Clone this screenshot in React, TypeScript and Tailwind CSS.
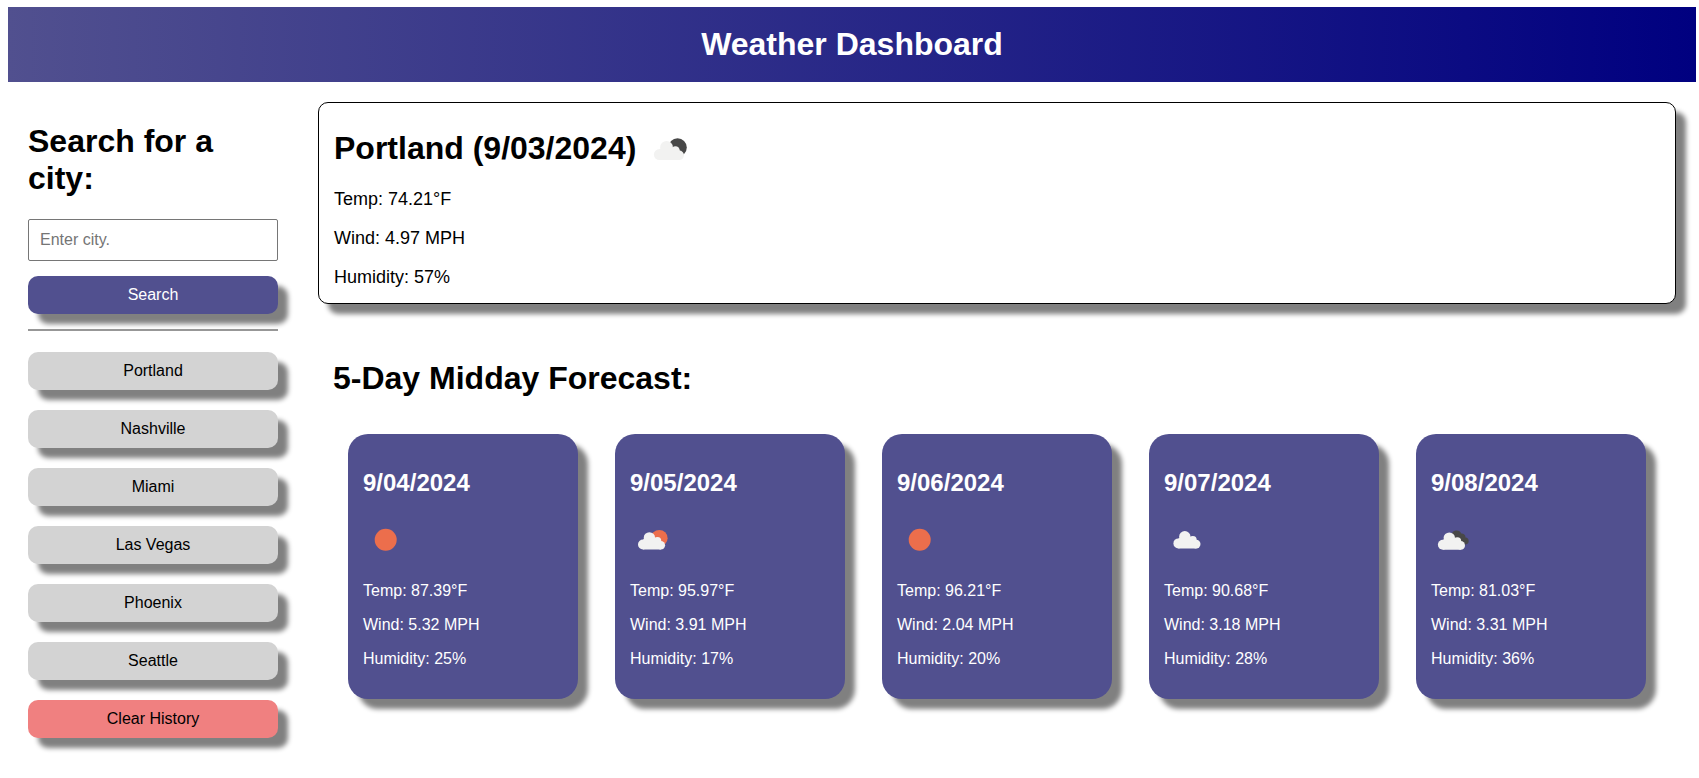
import React from "react";

type Condition = "clear" | "few-day" | "few-night" | "scattered" | "broken";

interface Day {
  date: string;
  condition: Condition;
  temp: string;
  wind: string;
  humidity: string;
}

const cities = ["Portland", "Nashville", "Miami", "Las Vegas", "Phoenix", "Seattle"];

const days: Day[] = [
  { date: "9/04/2024", condition: "clear", temp: "87.39", wind: "5.32", humidity: "25" },
  { date: "9/05/2024", condition: "few-day", temp: "95.97", wind: "3.91", humidity: "17" },
  { date: "9/06/2024", condition: "clear", temp: "96.21", wind: "2.04", humidity: "20" },
  { date: "9/07/2024", condition: "scattered", temp: "90.68", wind: "3.18", humidity: "28" },
  { date: "9/08/2024", condition: "broken", temp: "81.03", wind: "3.31", humidity: "36" },
];

function Cloud({ transform, fill }: { transform?: string; fill: string }) {
  return (
    <g transform={transform} fill={fill}>
      <circle cx="19.4" cy="20.9" r="5.7" />
      <circle cx="13" cy="27.5" r="5" />
      <circle cx="27.4" cy="23.9" r="3.9" />
      <circle cx="30.8" cy="28.2" r="4.3" />
      <path d="M13 22.5 L19 20 L27 22 L31 27 V32.5 H13 Z" />
    </g>
  );
}

function WeatherIcon({ condition, className }: { condition: Condition; className: string }) {
  return (
    <svg viewBox="0 0 45 45" className={className} aria-hidden="true">
      {condition === "clear" && <circle cx="22.7" cy="22.8" r="11" fill="#ec6e4c" />}
      {condition === "few-day" && (
        <>
          <circle cx="29.3" cy="21.2" r="8.3" fill="#ec6e4c" />
          <Cloud fill="#f2f2f1" />
        </>
      )}
      {condition === "few-night" && (
        <>
          <circle cx="29.3" cy="21.2" r="8.3" fill="#484848" />
          <Cloud fill="#f2f2f1" />
        </>
      )}
      {condition === "scattered" && <Cloud fill="#f2f2f1" transform="translate(1.4 -1.1)" />}
      {condition === "broken" && (
        <>
          <path
            d="M20.4 18 A5.2 5.2 0 0 1 30.3 16.5 A3.8 3.8 0 0 1 34.5 20.4 A3.6 3.6 0 0 1 34.8 27.5 L28 27.3 Z"
            fill="#484848"
          />
          <Cloud fill="#f2f2f1" transform="translate(-1.1 0.2)" />
        </>
      )}
    </svg>
  );
}

function SideButton({ label, className }: { label: string; className: string }) {
  return (
    <button
      type="button"
      className={`h-[38px] w-full shrink-0 rounded-[10px] text-base leading-[18px] shadow-[10px_10px_5px_gray] ${className}`}
    >
      {label}
    </button>
  );
}

function ForecastCard({ day }: { day: Day }) {
  return (
    <article className="h-[265px] w-[230px] rounded-[20px] bg-[#51508f] px-[15px] pt-[35px] text-white shadow-[10px_10px_5px_gray]">
      <h3 className="text-2xl leading-7 font-bold">{day.date}</h3>
      <WeatherIcon condition={day.condition} className="mt-5 block size-[45px]" />
      <div className="mt-5 flex flex-col gap-4 leading-[18px]">
        <p>Temp: {day.temp}°F</p>
        <p>Wind: {day.wind} MPH</p>
        <p>Humidity: {day.humidity}%</p>
      </div>
    </article>
  );
}

export default function App() {
  return (
    <div className="min-h-[778px] bg-white pt-[7px] pr-[3px] pl-2 font-['Liberation_Sans',Arial,sans-serif] text-black">
      <header className="flex h-[75px] items-center justify-center bg-linear-[to_right,#51508f,navy]">
        <h1 className="text-[32px] leading-[37px] font-bold text-white">Weather Dashboard</h1>
      </header>

      <div className="flex items-start">
        <aside className="flex w-[290px] flex-col px-5 pt-[41px]">
          <h2 className="text-[32px] leading-[37px] font-bold">Search for a city:</h2>
          <input
            type="text"
            placeholder="Enter city."
            className="mt-[22px] h-[42px] w-full rounded-[2px] border border-[#767676] px-[11px] text-base placeholder:text-[#757575]"
          />
          <SideButton label="Search" className="mt-[15px] bg-[#51508f] text-white" />
          <hr className="mt-[15px] h-0.5 border-0 bg-[#979797]" />
          <div className="mt-[21px] flex flex-col gap-5">
            {cities.map((city) => (
              <SideButton key={city} label={city} className="bg-[#d3d3d3]" />
            ))}
            <SideButton label="Clear History" className="bg-[#f08080]" />
          </div>
        </aside>

        <main className="flex flex-1 flex-col py-5 pr-5 pl-5">
          <section className="h-[202px] rounded-[10px] border border-black bg-white px-[15px] pt-[21px] shadow-[10px_10px_5px_gray]">
            <div className="flex h-[50px] items-center">
              <h2 className="pb-0.5 text-[32px] leading-[37px] font-bold">Portland (9/03/2024)</h2>
              <WeatherIcon condition="few-night" className="ml-[9px] size-[50px]" />
            </div>
            <div className="mt-[15px] flex flex-col gap-[18px] text-lg leading-[21px]">
              <p>Temp: 74.21°F</p>
              <p>Wind: 4.97 MPH</p>
              <p>Humidity: 57%</p>
            </div>
          </section>

          <section className="px-[15px] pt-[56px]">
            <h2 className="text-[32px] leading-[37px] font-bold">5-Day Midday Forecast:</h2>
            <div className="mt-[37px] flex gap-[37px] pl-[15px]">
              {days.map((day) => (
                <ForecastCard key={day.date} day={day} />
              ))}
            </div>
          </section>
        </main>
      </div>
    </div>
  );
}
